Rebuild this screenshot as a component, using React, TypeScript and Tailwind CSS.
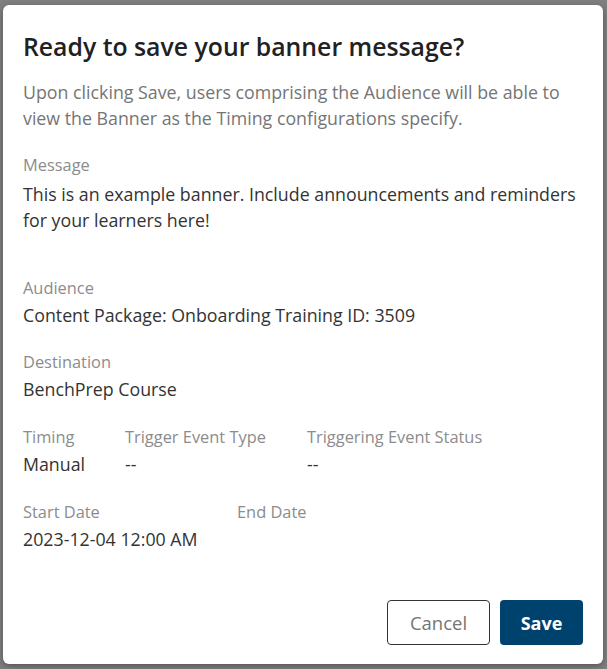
import React from "react";

const Field = ({ label, value, className = "" }: { label: string; value: string; className?: string }) => (
  <div className={className}>
    <div className="text-[16.4px] leading-[26px] text-[#8c8c8c]">{label}</div>
    <div className="text-[17.8px] leading-[26px] text-[#333333] mt-[1px]">{value}</div>
  </div>
);

export default function App() {
  return (
    <div
      className="w-[607px] h-[669px] bg-[#7f7f7f] overflow-hidden relative"
      style={{ fontFamily: '"Open Sans", "Noto Sans", sans-serif' }}
    >
      <div className="absolute left-[3px] top-[5px] w-[600px] h-[659px] bg-white rounded-[6px] shadow-[0_2px_6px_rgba(0,0,0,0.35)] flex flex-col px-[20px]">
        <h1 className="mt-[25px] text-[24.8px] leading-[32px] font-semibold text-[#212121]">
          Ready to save your banner message?
        </h1>
        <p className="mt-[17px] text-[17.8px] leading-[26px] text-[#757575]">
          Upon clicking Save, users comprising the Audience will be able to view the Banner as the Timing configurations specify.
        </p>
        <div className="mt-[21px]">
          <div className="text-[16.4px] leading-[26px] text-[#8c8c8c]">Message</div>
          <div className="text-[17.8px] leading-[26px] text-[#333333] mt-[3px] mr-[-14px]">
            This is an example banner. Include announcements and reminders for your learners here!
          </div>
        </div>
        <Field className="mt-[42px]" label="Audience" value="Content Package: Onboarding Training ID: 3509" />
        <Field className="mt-[21px]" label="Destination" value="BenchPrep Course" />
        <div className="mt-[22px] flex">
          <Field className="w-[102px]" label="Timing" value="Manual" />
          <Field className="w-[182px]" label="Trigger Event Type" value="--" />
          <Field label="Triggering Event Status" value="--" />
        </div>
        <div className="mt-[22px] flex">
          <Field className="w-[214px]" label="Start Date" value="2023-12-04 12:00 AM" />
          <Field label="End Date" value="" />
        </div>
        <div className="mt-auto mb-[19px] flex justify-end gap-[10px]">
          <button className="w-[103px] h-[45px] rounded-[4px] border border-[#333333] bg-white text-[18.5px] leading-[26px] text-[#757575]">
            Cancel
          </button>
          <button className="w-[83px] h-[45px] rounded-[4px] bg-[#00426e] text-[18px] leading-[26px] font-bold text-white">
            Save
          </button>
        </div>
      </div>
    </div>
  );
}
